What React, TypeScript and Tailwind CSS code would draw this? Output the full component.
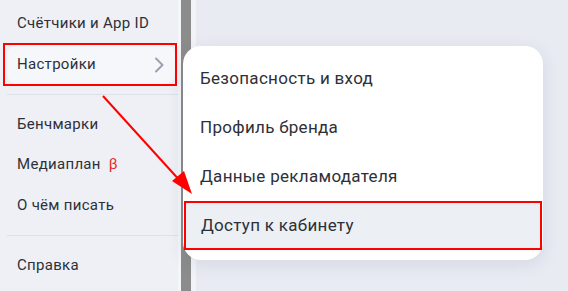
const menuItems = ["Безопасность и вход", "Профиль бренда", "Данные рекламодателя"];

export default function App() {
  return (
    <div className="relative flex h-[291px] w-[568px] overflow-hidden bg-[#e8ebf2] font-['Roboto',sans-serif] tracking-[0.3px] text-[#2d3039]">
      <aside className="flex w-[178px] shrink-0 flex-col bg-[#eef0f5] pt-[3px] text-[15px]">
        <div className="flex h-[40px] items-center pl-[17px]">Счётчики и App ID</div>

        <div className="ml-[3px] h-[43px] w-[174px] border-2 border-[#ff0000]">
          <div className="ml-[2px] flex h-full items-center justify-between rounded-[10px] bg-[#f6f7fa] pl-[10px] pr-[11px]">
            <span>Настройки</span>
            <svg width="10" height="16" viewBox="0 0 10 16" fill="none">
              <path d="M2 1.5 L8.5 8 L2 14.5" stroke="#9aa2b1" strokeWidth="2" strokeLinecap="round" strokeLinejoin="round" />
            </svg>
          </div>
        </div>

        <div className="ml-[7px] mt-[8px] h-px bg-[#dde1e9]" />

        <div className="mt-[9px] flex h-[40px] items-center pl-[17px]">Бенчмарки</div>
        <div className="flex h-[41px] items-center pl-[17px]">
          Медиаплан <span className="ml-[8px] text-[#e52b2b]">β</span>
        </div>
        <div className="flex h-[40px] items-center pl-[17px]">О чём писать</div>

        <div className="ml-[7px] mt-[10px] h-px bg-[#dde1e9]" />

        <div className="mt-[9px] flex h-[40px] items-center pl-[17px]">Справка</div>
      </aside>

      <div className="w-[3px] shrink-0 bg-[#f5f6f9]" />
      <div className="w-[10px] shrink-0 bg-[#8c8c8c]" />
      <div className="w-[5px] shrink-0 bg-[#f1f3f7]" />
      <main className="flex-1 bg-[#e8ebf2]" />

      <div className="absolute left-[183px] top-[46px] flex h-[214px] w-[360px] flex-col rounded-[18px] bg-white pt-[8px] text-[17px] shadow-[0_4px_18px_rgba(40,50,80,0.10)]">
        {menuItems.map((item) => (
          <div key={item} className="flex h-[49px] items-center pl-[17px]">
            {item}
          </div>
        ))}
        <div className="ml-[1px] h-[49px] w-[358px] border-2 border-[#ff0000] bg-[#eceff4]">
          <div className="flex h-full items-center pl-[15px]">Доступ к кабинету</div>
        </div>
      </div>

      <svg className="pointer-events-none absolute left-0 top-0" width="568" height="291">
        <line x1="103" y1="96" x2="182" y2="183" stroke="#ff0000" strokeWidth="2" />
        <polygon points="192,194 172,181 184,171" fill="#ff0000" />
      </svg>
    </div>
  );
}
